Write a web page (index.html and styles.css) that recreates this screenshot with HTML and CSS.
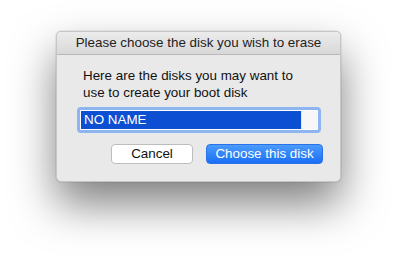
FILE: index.html
```html
<!DOCTYPE html>
<html>
<head>
<meta charset="utf-8">
<link rel="stylesheet" href="styles.css">
</head>
<body>
<div class="stage">
  <div class="window">
    <div class="titlebar">Please choose the disk you wish to erase</div>
    <div class="content">
      <p class="message">Here are the disks you may want to<br>use to create your boot disk</p>
      <div class="listbox">
        <div class="list">
          <div class="item selected">NO NAME</div>
        </div>
        <div class="scroll"></div>
      </div>
      <div class="buttons">
        <button class="btn cancel">Cancel</button>
        <button class="btn primary">Choose this disk</button>
      </div>
    </div>
  </div>
</div>
</body>
</html>
```
FILE: styles.css
```css
html, body {
  margin: 0;
  padding: 0;
  background: #ffffff;
}
body {
  font-family: "Liberation Sans", Arial, sans-serif;
  font-size: 13.4px;
  color: #111;
}
.stage {
  padding: 31px 0 0 56px;
  height: 263px;
  box-sizing: border-box;
}
.window {
  width: 285px;
  height: 151px;
  box-sizing: border-box;
  background: #e9e9e9;
  border-radius: 5px;
  border: 1px solid #c6c6c6;
  box-shadow: 0 22px 44px 0 rgba(0,0,0,0.5), 0 0 0 0.5px rgba(0,0,0,0.12);
  overflow: hidden;
}
.titlebar {
  height: 22px;
  line-height: 22px;
  text-align: center;
  background: linear-gradient(#ececec, #d8d8d8);
  border-bottom: 1px solid #b9b9b9;
  color: #222;
}
.content {
  padding: 12px 0 0 26px;
}
.message {
  margin: 0;
  line-height: 17px;
  color: #111;
}
.listbox {
  margin: 6px 0 0 -6px;
  width: 244px;
  height: 26px;
  box-sizing: border-box;
  border: 3px solid #8eb5f0;
  border-radius: 4px;
  background: #fff;
  display: flex;
  padding: 1px;
}
.list {
  flex: 1;
}
.item {
  height: 18px;
  line-height: 18px;
  padding-left: 3px;
  color: #fff;
}
.selected {
  background: #0c4fd3;
}
.scroll {
  width: 15px;
  background: #f7f7f7;
  border-left: 1px solid #e6e6e6;
}
.buttons {
  display: flex;
  gap: 13px;
  margin: 11px 0 0 28px;
}
.btn {
  font-family: inherit;
  font-size: 13.4px;
  height: 20px;
  padding: 0;
  border-radius: 4px;
  line-height: 18px;
}
.cancel {
  width: 82px;
  background: #fff;
  border: 1px solid #bdbdbd;
  color: #111;
}
.primary {
  width: 117px;
  background: linear-gradient(#4b9bfc, #1a6ff5);
  border: 1px solid #2a72e6;
  color: #fff;
}
```
